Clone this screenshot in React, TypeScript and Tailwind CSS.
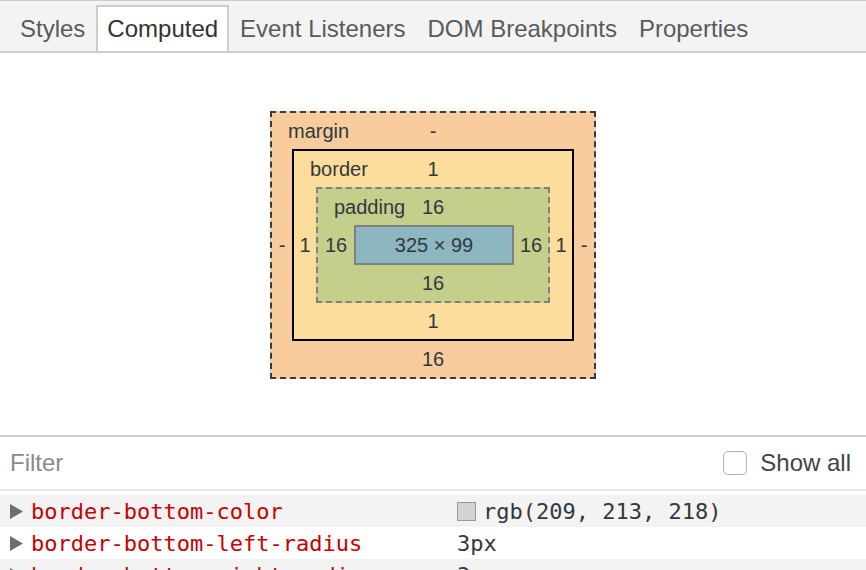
import React from "react";

const tabs = ["Styles", "Computed", "Event Listeners", "DOM Breakpoints", "Properties"];

const props = [
  { name: "border-bottom-color", value: "rgb(209, 213, 218)", swatch: "#d1d5da" },
  { name: "border-bottom-left-radius", value: "3px" },
  { name: "border-bottom-right-radius", value: "3px" },
];

function Row3({ top, label, left, right, bottom, children, className }: {
  top: string;
  label?: string;
  left: React.ReactNode;
  right: React.ReactNode;
  bottom: string;
  children: React.ReactNode;
  className: string;
}) {
  return (
    <div className={`flex flex-col ${className}`}>
      <div className="relative flex h-[36px] items-center justify-center">
        {label && <span className="absolute left-[16px]">{label}</span>}
        <span>{top}</span>
      </div>
      <div className="flex items-center">
        {left}
        {children}
        {right}
      </div>
      <div className="flex h-[36px] items-center justify-center">{bottom}</div>
    </div>
  );
}

export default function App() {
  return (
    <div className="h-[570px] w-[866px] overflow-hidden bg-white font-['Liberation_Sans',Arial,sans-serif]">
      {/* tab strip */}
      <div className="flex h-[53px] items-end border-t border-b-2 border-[#cccccc] bg-[#f3f3f3] pl-[9px]">
        {tabs.map((t, i) => (
          <div
            key={t}
            className={[
              "flex h-[46px] items-center border-x-2 border-t-2 px-[9px] text-[24px]",
              i === 1 ? "border-[#cccccc] bg-white text-[#333333]" : "border-transparent text-[#5a5a5a]",
            ].join(" ")}
          >
            {t}
          </div>
        ))}
      </div>

      {/* box model */}
      <div className="flex h-[382px] justify-center pt-[58px] text-[20px] text-[#303942]">
        <Row3
          className="h-[268px] w-[326px] border-2 border-dashed border-[#333a41] bg-[#f9cc9d]"
          label="margin"
          top="-"
          bottom="16"
          left={<span className="w-[20px] text-center">-</span>}
          right={<span className="w-[20px] text-center">-</span>}
        >
          <Row3
            className="h-[192px] w-[282px] border-2 border-black bg-[#fddd9b]"
            label="border"
            top="1"
            bottom="1"
            left={<span className="w-[22px] text-center">1</span>}
            right={<span className="w-[22px] text-center">1</span>}
          >
            <Row3
              className="h-[116px] w-[234px] border-2 border-dashed border-[#808080] bg-[#c3cf8a]"
              label="padding"
              top="16"
              bottom="16"
              left={<span className="w-[36px] text-center">16</span>}
              right={<span className="w-[34px] text-center">16</span>}
            >
              <div className="flex h-[40px] w-[160px] items-center justify-center border-2 border-[#808080] bg-[#8cb6c0]">
                325 × 99
              </div>
            </Row3>
          </Row3>
        </Row3>
      </div>

      {/* filter */}
      <div className="flex h-[56px] items-center justify-between border-y-2 border-t-[#cccccc] border-b-[#e6e6e6] pl-[10px] pr-[15px] text-[24px]">
        <span className="text-[#8a8a8a]">Filter</span>
        <label className="flex items-center gap-[13px] text-[#444444]">
          <span className="h-[24px] w-[24px] rounded-[5px] border border-[#b3b3b3] bg-white shadow-[inset_0_1px_1px_rgba(0,0,0,0.05)]" />
          Show all
        </label>
      </div>

      {/* computed props */}
      <div className="pt-[4px] font-['DejaVu_Sans_Mono',monospace] text-[22px]">
        {props.map((p, i) => (
          <div key={p.name} className={`flex h-[32px] items-center ${i % 2 === 0 ? "bg-[#f3f3f3]" : "bg-white"}`}>
            <svg width="14" height="15" viewBox="0 0 14 15" className="ml-[10px] shrink-0">
              <path d="M0 0 L13 7.5 L0 15 Z" fill="#6e6e6e" />
            </svg>
            <span className="ml-[7px] w-[426px] shrink-0 text-[#c80000]">{p.name}</span>
            {p.swatch && (
              <span
                className="mr-[7px] h-[19px] w-[19px] shrink-0 border border-[#9a9a9a]"
                style={{ backgroundColor: p.swatch }}
              />
            )}
            <span className="text-[#303942]">{p.value}</span>
          </div>
        ))}
      </div>
    </div>
  );
}
